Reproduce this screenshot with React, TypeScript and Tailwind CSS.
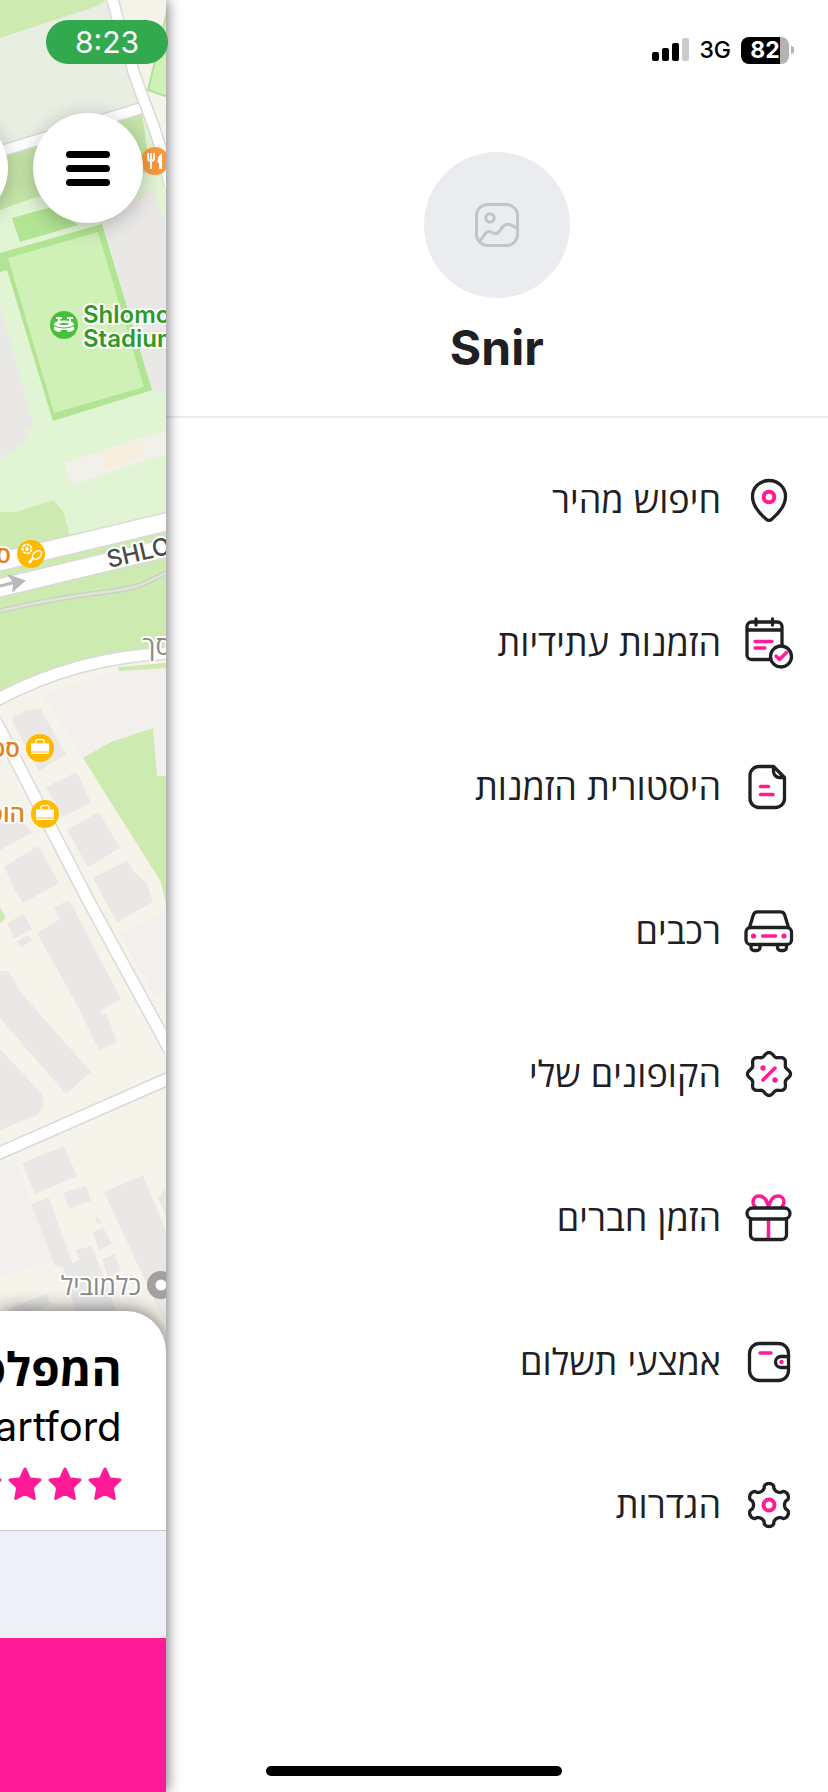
import type { ReactNode } from "react";

interface MenuItem {
  label: string;
  icon: ReactNode;
}

const PINK = "#ff1a97";

// closed wavy outline around the middle of a 48px icon
function wavyPath(lobes: number, radius: number, depth: number, power: number) {
  const points: string[] = [];
  for (let i = 0; i < 180; i++) {
    const angle = (i / 180) * Math.PI * 2;
    const wave = Math.cos(angle * lobes);
    const r = radius + depth * Math.sign(wave) * Math.pow(Math.abs(wave), power);
    points.push(`${(24 + r * Math.sin(angle)).toFixed(2)} ${(24 - r * Math.cos(angle)).toFixed(2)}`);
  }
  return `M${points.join("L")}Z`;
}

function Icon({ children }: { children: ReactNode }) {
  return (
    <svg
      viewBox="0 0 48 48"
      className="size-12 shrink-0 overflow-visible"
      fill="none"
      stroke="#202024"
      strokeWidth="3.300"
      strokeLinecap="round"
      strokeLinejoin="round"
      aria-hidden="true"
    >
      {children}
    </svg>
  );
}

const menuItems: MenuItem[] = [
  {
    label: "חיפוש מהיר",
    icon: (
      <Icon>
        <path d="M24 4.500C14.500 4.500 7.500 11.700 7.500 20.500c0 9 6.500 16.500 13.500 22.500q3 2.700 6 0c7-6 13.500-13.500 13.500-22.500C40.500 11.700 33.500 4.500 24 4.500Z" />
        <circle cx="24" cy="21" r="5.300" stroke={PINK} strokeWidth="4" />
      </Icon>
    ),
  },
  {
    label: "הזמנות עתידיות",
    icon: (
      <Icon>
        <path d="M37 26V7.500a4.500 4.500 0 0 0-4.500-4.500h-26A4.500 4.500 0 0 0 2 7.500v28.500a4.500 4.500 0 0 0 4.500 4.500H25M2 11h35M11 0v6M27.500 0v6" />
        <path d="M10 22.500h17M10 29h10" stroke={PINK} />
        <circle cx="36" cy="37.500" r="10.500" />
        <path d="m31 37 3.500 3.500 7-7" stroke={PINK} />
      </Icon>
    ),
  },
  {
    label: "היסטורית הזמנות",
    icon: (
      <Icon>
        <path d="M28.500 3.500H14A9 9 0 0 0 5 12.500v23a9 9 0 0 0 9 9h16.500a9 9 0 0 0 9-9V14.500ZM28.500 3.500v5a6 6 0 0 0 6 6h5" />
        <path d="M15.500 23.500h8M15.500 31.500h12.500" stroke={PINK} strokeWidth="3.500" />
      </Icon>
    ),
  },
  {
    label: "רכבים",
    icon: (
      <Icon>
        <rect x="1" y="20.500" width="45.500" height="17" rx="4.500" />
        <path d="m4.500 20.500 3.800-12.500a4.500 4.500 0 0 1 4.400-3.200h22.600a4.500 4.500 0 0 1 4.400 3.200l3.800 12.500M6 38v2.500a3 3 0 0 0 3 3h3a3 3 0 0 0 3-3V38M32.500 38v2.500a3 3 0 0 0 3 3h3a3 3 0 0 0 3-3V38" />
        <path d="M17.500 29h13" stroke={PINK} />
        <circle cx="8.500" cy="29" r="2.600" fill={PINK} stroke="none" />
        <circle cx="39" cy="29" r="2.600" fill={PINK} stroke="none" />
      </Icon>
    ),
  },
  {
    label: "הקופונים שלי",
    icon: (
      <Icon>
        <path d={wavyPath(8, 19.700, 1.800, 1)} />
        <path d="m18 30 12-12" stroke={PINK} strokeWidth="3.500" />
        <circle cx="18" cy="18" r="2.700" fill={PINK} stroke="none" />
        <circle cx="30" cy="30" r="2.700" fill={PINK} stroke="none" />
      </Icon>
    ),
  },
  {
    label: "הזמן חברים",
    icon: (
      <Icon>
        <path
          d="M23.500 13C22 6 18.500 2 14 2c-4 0-6 3-6 6 0 2 1 3.500 2 4.500M23.500 13C25 6 28.500 2 33 2c4 0 6 3 6 6 0 2-1 3.500-2 4.500M23.500 26v18"
          stroke={PINK}
          strokeWidth="3.500"
        />
        <rect x="2" y="14" width="43" height="11" rx="5.500" />
        <path d="M5.500 25v16a4.500 4.500 0 0 0 4.500 4.500h27a4.500 4.500 0 0 0 4.500-4.500V25" />
      </Icon>
    ),
  },
  {
    label: "אמצעי תשלום",
    icon: (
      <Icon>
        <rect x="4.500" y="5.500" width="39" height="37" rx="10" />
        <path d="M43.500 18.500h-7.500a5.500 5.500 0 0 0 0 11h7.500" />
        <path d="M15 15h11" stroke={PINK} />
        <circle cx="36.500" cy="24" r="2.200" fill={PINK} stroke="none" />
      </Icon>
    ),
  },
  {
    label: "הגדרות",
    icon: (
      <Icon>
        <path d={wavyPath(6, 18.500, 3, 0.500)} />
        <circle cx="24" cy="24" r="5.500" stroke={PINK} strokeWidth="4" />
      </Icon>
    ),
  },
];

function Road({ d, width }: { d: string; width: number }) {
  return (
    <>
      <path d={d} fill="none" stroke="#d9dad8" strokeWidth={width + 3} />
      <path d={d} fill="none" stroke="#ffffff" strokeWidth={width} />
    </>
  );
}

function BagMarker({ x, y }: { x: number; y: number }) {
  return (
    <g transform={`translate(${x} ${y})`}>
      <circle r="14" fill="#ffba00" />
      <path d="M-9-4.500h18v8H-9zM-9 4.500h18v1.500H-9z" fill="#fff" />
      <path d="M-4-5v-1.500q0-2 2-2h4q2 0 2 2V-5" fill="none" stroke="#fff" strokeWidth="1.500" />
    </g>
  );
}

function MapView() {
  return (
    <svg viewBox="0 0 166 1400" className="absolute top-0 left-0 h-[1400px] w-[166px]" aria-label="Map">
      <rect width="166" height="1400" fill="#f6f3ea" />

      {/* parks and the stadium */}
      <path d="M0 38 92 8l15-8h6l30 103L0 148Z" fill="#e8eee2" />
      <path d="M0 0h107L92 8 0 38Z" fill="#cdeab1" />
      <path d="M0 150 142 110l24 75v350L0 600Z" fill="#e1f4d3" />
      <path d="M0 152 142 112l8 60L33 198 0 210Z" fill="#c6e5a9" />
      <path d="M168 8 148 90l20 7Z" fill="#cff0b7" stroke="#aee391" strokeWidth="2" />
      <path d="m103 223 50-35 13 39v166l-14-3Z" fill="#e9e8e7" />
      <path d="m12 218 40-11 26 18-58 17Z" fill="#b1e493" />
      <path d="M0 253 102 224l50 166-99 31L7 270l-7 2Z" fill="#b1e493" />
      <path d="m8 258 90-26 46 155-90 26Z" fill="#cff0b7" />
      <path d="m0 307 34 120-10 3 3 10-27 19Z" fill="#e9e8e7" />
      <path d="m64 463 102-33v24l-94 31Z" fill="#f1f0ea" />
      <path d="m101 453 39-13 6 15-40 14Z" fill="#f6eedb" />
      <path d="M0 512h16l37-12 10 11 7 25 96-20v130q-90 10-166 50Z" fill="#cdeab1" />

      <path d="M0 611Q40 601 90 594 135 589 145 583L166 573" fill="none" stroke="#c7cfbc" strokeWidth="5" />
      <path d="M0 611Q40 601 90 594 135 589 145 583L166 573" fill="none" stroke="#e0e1da" strokeWidth="3" />
      <path d="m42 695 76-25 48-3v109h-9l-4-48-42 14-28 16Z" fill="#f1f0ec" />
      <path d="m118 667 48-4v5l-47 3Z" fill="#cdeab1" />
      <path d="m153 728 4 48h9v129l-5-23L83 758l28-16Z" fill="#cdeab1" />
      <path d="m119 932 47-20v78l-11 6Z" fill="#f1f0ec" />
      <path d="m0 1163 15-5 37 102-52 17Z" fill="#f1f0ec" />
      <path d="m0 907 6 11-6 5Z" fill="#cdeab1" />

      {/* buildings */}
      <g fill="#e9e8e7">
        <path d="m13 717 12-6 15-3 26 46-27 17-26-48Z" />
        <path d="m46 787 31-15 14 31-28 14Z" />
        <path d="m67 830 32-18 21 36-32 19Z" />
        <path d="m93 878 34-17 7 11 13 11 6 19-36 20Z" />
        <path d="m4 867 34-21 21 37-36 20-8-13Z" />
        <path d="m0 822 20-4 12 15-32 17Z" />
        <path d="m7 923 17-9 8 15-18 10Z" />
        <path d="m17 941 11-6 4 5-11 8Z" />
        <path d="m54 907 15-7 52 99-22 13 8 3 10 27-18 8-21-43L37 933l22-13Z" />
        <path d="M0 971h7l10 12-1 4 75 85-25 22-66-76Z" />
        <path d="m0 1049 40 43q8 10-3 23L0 1130Z" />
        <path d="m22 1163 42-17 13 30-42 18Z" />
        <path d="m63 1193 23-7 5 15-22 7Z" />
        <path d="m31 1204 18-6 23 65 8-3-5-10 17-4 28 74H78l-15-53-8-1Z" />
        <path d="m104 1192 39-17 23 57v88l-3-1Z" />
        <path d="m93 1232 10-5 9 17-13 6Z" />
        <path d="m95 1223 2-7 5 8Z" />
        <path d="m102 1259 13-5 6 17-13 6Z" />
        <path d="m158 1198 8-10v28Z" />
        <path d="m10 1308 37-14 3 11-30 12Z" />
      </g>

      <Road d="M-5 153 145 107" width={10} />
      <Road d="M111-6Q130 66 146 106T170 186" width={10} />
      <Road d="M-5 563 170 521" width={17} />
      <Road d="M-5 589 170 547" width={17} />
      <Road d="M-5 701Q75 657 170 653" width={11} />
      <Road d="M-5 720 88 900 170 1050" width={11} />
      <Road d="M-5 1155 170 1078" width={11} />
      <path d="M0 586 16 582M11 577l12 4-9 8 1-7Z" fill="#b8b8b8" stroke="#b8b8b8" strokeWidth="3" />

      {/* markers */}
      <g transform="translate(155 161)">
        <circle r="14" fill="#fb9a3c" />
        <path d="M-7-8v5q0 3 3 3M-1-8v5q0 3-3 3M-4-8v16" fill="none" stroke="#fff" strokeWidth="2" />
        <path d="M7-8q-6 5-4 10h1v6h3Z" fill="#fff" />
      </g>
      <g transform="translate(64 325)">
        <circle r="14" fill="#4abf3a" />
        <ellipse cy="-1" rx="10" ry="3.500" fill="#fff" />
        <path d="M-10 0q10 5 20 0v5q-3 2-6 2l-1-2h-6l-1 2q-3 0-6-2ZM-8-8h6v2h-2v3h-2v-3h-2ZM3-8h6v2H7v3H5v-3H3Z" fill="#fff" />
        <ellipse cy="-1" rx="5" ry="1" fill="#4abf3a" />
        <path d="M-10 1q10 4 20 0" fill="none" stroke="#4abf3a" />
      </g>
      <g transform="translate(31 554)" stroke="#fff" fill="none">
        <circle r="14" fill="#ffba00" stroke="none" />
        <circle cx="-4" cy="-5" r="4.500" strokeWidth="2" strokeDasharray="3 1" />
        <circle cx="-4" cy="-5" r="1.500" fill="#fff" />
        <ellipse cx="6" cy="1" rx="5" ry="3.500" transform="rotate(-40 6 1)" strokeWidth="1.500" />
        <path d="m2 4-4 5" strokeWidth="2.500" />
      </g>
      <BagMarker x={40} y={748} />
      <BagMarker x={45} y={814} />
      <circle cx="161" cy="1285" r="14" fill="#a3a19e" />
      <circle cx="161" cy="1285" r="5.500" fill="#fff" />

      <g className="font-['Inter','Open_Sans',sans-serif] text-[24px] font-medium" stroke="#fff" strokeWidth="4" strokeLinejoin="round" paintOrder="stroke">
        <g fill="#2f9a27" className="font-semibold">
          <text x="83" y="323">Shlomo</text>
          <text x="83" y="347">Stadium</text>
        </g>
        <text x="109" y="568" fill="#4a4a4a" transform="rotate(-13 109 568)">SHLOMO</text>
        <g fill="#e0821f" direction="rtl" className="font-semibold">
          <text x="11" y="563">ספורט</text>
          <text x="20" y="757">ספרים</text>
          <text x="25" y="822">הוסטל</text>
        </g>
        <g fill="#8a8a8a" direction="rtl" className="text-[26px]">
          <text x="141" y="1295">כלמוביל</text>
          <text x="171" y="655">סך</text>
          <text x="177" y="680">ג</text>
        </g>
      </g>
    </svg>
  );
}

function Star() {
  return (
    <svg viewBox="0 0 34 34" className="size-[34px] shrink-0" fill={PINK} stroke={PINK} strokeWidth="3" strokeLinejoin="round" aria-hidden="true">
      <path d="m17 2 4.500 9.800 10.500 1.200-7.700 7.300 2 11.200L17 26.500 7.700 31.500l2-11.200L2 13l10.500-1.200Z" />
    </svg>
  );
}

function MapPanel() {
  return (
    <main className="relative z-10 w-1/5 shrink-0 bg-white shadow-[2px_0_12px_rgba(0,0,0,0.5)]">
      <div className="relative flex h-full flex-col overflow-hidden">
        <MapView />
        <div className="relative flex flex-1 items-start justify-end gap-[25px] pt-[113px] pr-[23px]">
          <button type="button" aria-label="Location" className="size-[110px] shrink-0 rounded-full bg-white shadow-[0_4px_20px_rgba(0,0,0,0.25)]" />
          <button
            type="button"
            aria-label="Menu"
            className="flex size-[110px] shrink-0 flex-col items-center justify-center gap-[7px] rounded-full bg-white shadow-[0_4px_20px_rgba(0,0,0,0.25)]"
          >
            <span className="h-[7px] w-11 rounded-full bg-black" />
            <span className="h-[7px] w-11 rounded-full bg-black" />
            <span className="h-[7px] w-11 rounded-full bg-black" />
          </button>
        </div>
        <section className="relative flex h-[220px] flex-col items-end rounded-tr-[40px] border-b border-[#c8c8cc] bg-white pt-7 pr-11 whitespace-nowrap text-black shadow-[0_0_20px_rgba(0,0,0,0.6)]">
          <h2 dir="rtl" className="text-[46px] leading-[60px] font-bold">המפלסים</h2>
          <p className="text-[40px] leading-[56px]">Hartford</p>
          <div className="mt-3 flex gap-[6px]">
            <Star />
            <Star />
            <Star />
            <Star />
          </div>
        </section>
        <div className="relative h-[107px] bg-[#eff0f6]" />
        <div className="relative h-[154px] bg-[#ff1a97]" />
      </div>
    </main>
  );
}

function StatusBar() {
  return (
    <div className="flex h-[100px] items-center justify-end gap-[10px] pr-[34px] text-black">
      <svg viewBox="0 0 37 24" className="h-6 w-[37px]" aria-label="Signal">
        <rect y="14" width="7" height="9" rx="2" />
        <rect x="10" y="10" width="7" height="13" rx="2" />
        <rect x="20" y="5" width="7" height="18" rx="2" />
        <rect x="30" width="7" height="23" rx="2" fill="#cccccc" />
      </svg>
      <span className="text-[23px] leading-8 font-medium">3G</span>
      <div className="flex items-center gap-[2px]">
        <span className="flex h-[27px] w-12 items-center justify-center rounded-lg bg-linear-to-r from-black from-82% to-[#b3b3b3] to-82% text-[23px] leading-none font-bold text-white">
          82
        </span>
        <span className="h-2 w-[3px] rounded-r-full bg-[#b3b3b3]" />
      </div>
    </div>
  );
}

export default function App() {
  return (
    <div className="relative flex min-h-screen overflow-hidden bg-white font-['Inter','Open_Sans',sans-serif]">
      <MapPanel />

      <aside className="flex flex-1 flex-col text-[#202024]">
        <StatusBar />
        <header className="flex h-[318px] flex-col items-center border-b-2 border-[#ebecf3] pt-[52px]">
          <div className="flex size-[146px] items-center justify-center rounded-full bg-[#ebecf0]">
            <svg viewBox="0 0 44 44" className="size-11" fill="none" stroke="#bfc5c8" strokeWidth="3" aria-hidden="true">
              <rect x="1.500" y="1.500" width="41" height="41" rx="11" />
              <circle cx="15" cy="15" r="4.200" />
              <path d="M5 38 10 31q3-4 7-1.500 5 3 8-2l3-4q4-4 9-1l5 3" />
            </svg>
          </div>
          <h1 className="mt-5 text-[48px] leading-[60px] font-bold">Snir</h1>
        </header>

        <nav dir="rtl" className="grid flex-1 grid-rows-8 pt-[10px]">
          {menuItems.map((item) => (
            <a key={item.label} href="#" className="flex items-center gap-6 ps-[35px] text-[36px] leading-[48px]">
              {item.icon}
              <span>{item.label}</span>
            </a>
          ))}
        </nav>
        <footer className="h-[215px]" />
      </aside>

      <time className="absolute top-5 left-[46px] z-20 flex h-11 w-[122px] items-center justify-center rounded-full bg-[#32a84f] text-[30px] text-white">
        8:23
      </time>
      <div className="absolute bottom-4 left-1/2 z-20 h-[10px] w-[296px] -translate-x-1/2 rounded-full bg-black" />
    </div>
  );
}
